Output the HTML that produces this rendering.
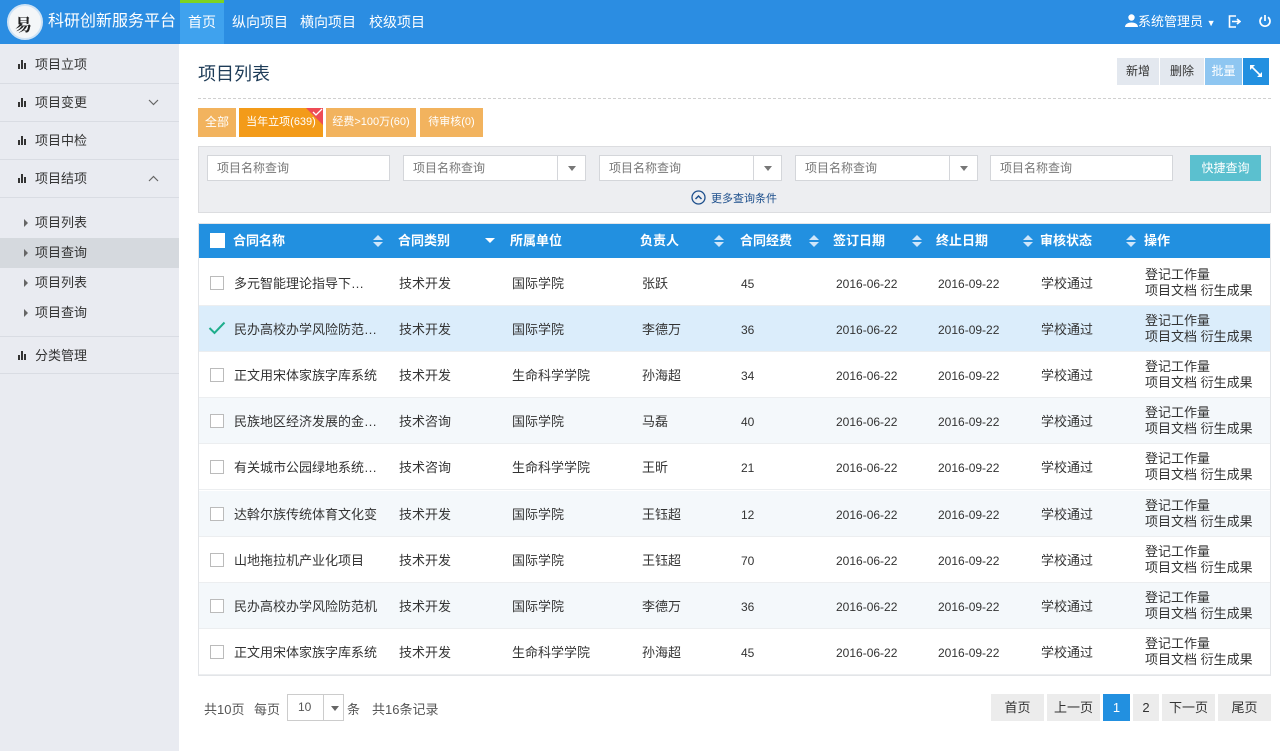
<!DOCTYPE html>
<html><head><meta charset="utf-8"><style>
*{box-sizing:border-box;margin:0;padding:0}
body{width:1280px;height:751px;overflow:hidden;font-family:"Liberation Sans","Noto Sans CJK SC",sans-serif;font-size:13px;color:#333;background:#fff;position:relative}
.abs{position:absolute}
.top{left:0;top:0;width:1280px;height:44px;background:#2b8de2}
.nav{top:0;height:44px;line-height:44px;color:#fff;font-size:14px}
.side{left:0;top:44px;width:179px;height:707px;background:#e9ebf1}
.si{left:0;width:179px;height:38px;line-height:38px;border-bottom:1px solid #d9dce3;font-size:13px;color:#333;padding-left:35px}
.bar{position:absolute;left:18px;top:14px;width:9px;height:9px}
.bar i{position:absolute;bottom:0;width:2px;background:#333}
.sub{left:0;width:179px;height:30px;line-height:30px;padding-left:35px}
.sub:before{content:"";position:absolute;left:24px;top:11px;border-left:4px solid #666;border-top:4px solid transparent;border-bottom:4px solid transparent}
.btn{top:58px;height:27px;line-height:27px;text-align:center;font-size:12px;background:#e3e8ef;color:#333}
.tag{top:108px;height:29px;line-height:29px;color:#fff;font-size:11px;text-align:center;background:#f2b35e}
.inp{top:155px;height:26px;border:1px solid #d4d6da;background:#fff;color:#777;font-size:12px;line-height:24px;padding-left:9px}
.inp .dd{position:absolute;right:0;top:0;width:28px;height:24px;border-left:1px solid #d4d6da}
.inp .dd:after{content:"";position:absolute;left:10px;top:10px;border-top:5px solid #777;border-left:4px solid transparent;border-right:4px solid transparent}
.th{top:223px;left:198px;width:1073px;height:35px;background:#2290e0}
.th span{position:absolute;top:0;line-height:35px;color:#fff;font-weight:bold;font-size:13px}
.sort{position:absolute;top:12px;width:10px;height:12px}
.sort:before{content:"";position:absolute;left:0;top:0;border-bottom:5px solid #cfe6fa;border-left:5px solid transparent;border-right:5px solid transparent}
.sort:after{content:"";position:absolute;left:0;top:7px;border-top:5px solid #cfe6fa;border-left:5px solid transparent;border-right:5px solid transparent}
.row{left:198px;width:1073px;height:46px;border-bottom:1px solid #eceef0;font-size:13px}
.row span{position:absolute;top:1px;line-height:46px}
.row .d{font-size:12px}
.row .op{line-height:16px;top:7px}
.cb{position:absolute;left:12px;top:16px;width:14px;height:14px;border:1px solid #bbb;background:#fff}
.pg{top:694px;height:27px;line-height:27px;text-align:center;background:#ececec;font-size:13px}
</style></head><body>
<div class="abs top"></div>
<div class="abs" style="left:7px;top:4px;width:36px;height:36px;border-radius:50%;background:#f4f6f8;border:2px solid #cfe3f5"><span style="position:absolute;left:6px;top:5px;font-family:'Noto Serif CJK SC',serif;font-weight:bold;font-size:17px;color:#222">易</span></div>
<div class="abs nav" style="left:48px;font-size:16px">科研创新服务平台</div>
<div class="abs" style="left:180px;top:0;width:44px;height:44px;background:#3fa2ee;border-top:3px solid #7ed321"></div>
<div class="abs nav" style="left:188px">首页</div>
<div class="abs nav" style="left:232px">纵向项目</div>
<div class="abs nav" style="left:300px">横向项目</div>
<div class="abs nav" style="left:369px">校级项目</div>
<div class="abs nav" style="left:1125px;font-size:13px"><svg width="13" height="13" viewBox="0 0 13 13" style="vertical-align:-1px"><circle cx="6.5" cy="3.5" r="3.2" fill="#fff"/><path d="M0 13 C0 7 13 7 13 13Z" fill="#fff"/></svg>系统管理员 <span style="font-size:9px">▼</span></div>
<svg class="abs" style="left:1228px;top:15px" width="13" height="13" viewBox="0 0 13 13" fill="none" stroke="#fff" stroke-width="1.6"><path d="M8 1H1.5v11H8M4 6.5h8M9 4l3 2.5-3 2.5"/></svg>
<svg class="abs" style="left:1258px;top:14px" width="14" height="14" viewBox="0 0 14 14" fill="none" stroke="#fff" stroke-width="1.7"><path d="M7 1v6M4 3.2A5 5 0 1 0 10 3.2"/></svg>

<div class="abs side"></div>
<div class="abs si" style="top:46px"><span class="bar"><i style="left:0;height:5px"></i><i style="left:3px;height:9px"></i><i style="left:6px;height:6px"></i></span>项目立项</div>
<div class="abs si" style="top:84px"><span class="bar"><i style="left:0;height:5px"></i><i style="left:3px;height:9px"></i><i style="left:6px;height:6px"></i></span>项目变更<svg style="position:absolute;left:148px;top:15px" width="11" height="7"><path d="M1 1l4.5 4.5L10 1" stroke="#666" fill="none" stroke-width="1.2"/></svg></div>
<div class="abs si" style="top:122px"><span class="bar"><i style="left:0;height:5px"></i><i style="left:3px;height:9px"></i><i style="left:6px;height:6px"></i></span>项目中检</div>
<div class="abs si" style="top:160px"><span class="bar"><i style="left:0;height:5px"></i><i style="left:3px;height:9px"></i><i style="left:6px;height:6px"></i></span>项目结项<svg style="position:absolute;left:148px;top:15px" width="11" height="7"><path d="M1 6l4.5-4.5L10 6" stroke="#666" fill="none" stroke-width="1.2"/></svg></div>
<div class="abs sub" style="top:208px">项目列表</div>
<div class="abs sub" style="top:238px;background:#d5d9de">项目查询</div>
<div class="abs sub" style="top:268px">项目列表</div>
<div class="abs sub" style="top:298px">项目查询</div>
<div class="abs si" style="top:336px;border-top:1px solid #d9dce3"><span class="bar"><i style="left:0;height:5px"></i><i style="left:3px;height:9px"></i><i style="left:6px;height:6px"></i></span>分类管理</div>

<div class="abs" style="left:198px;top:60px;font-size:18px;color:#1d3b57">项目列表</div>
<div class="abs" style="left:198px;top:98px;width:1073px;border-top:1px dashed #d0d0d0"></div>
<div class="abs btn" style="left:1117px;width:42px">新增</div>
<div class="abs btn" style="left:1160px;width:44px">删除</div>
<div class="abs btn" style="left:1205px;width:37px;background:#8ec6f1;color:#fff">批量</div>
<div class="abs btn" style="left:1243px;width:26px;background:#2290e0"><svg width="14" height="14" viewBox="0 0 14 14" style="margin-top:6px" fill="#fff"><path d="M1 1h5L1 6zM13 13H8l5-5z"/><path d="M3 3l8 8" stroke="#fff" stroke-width="1.6"/></svg></div>

<div class="abs tag" style="left:198px;width:38px;font-size:12px">全部</div>
<div class="abs tag" style="left:239px;width:84px;background:#f39b19">当年立项(639)</div>
<div class="abs" style="left:306px;top:108px;width:0;height:0;border-top:17px solid #ee4b55;border-left:17px solid transparent"></div>
<svg class="abs" style="left:312px;top:108px" width="11" height="9"><path d="M1 4l3 3 6-6" stroke="#fff" fill="none" stroke-width="1.3"/></svg>
<div class="abs tag" style="left:326px;width:90px">经费&gt;100万(60)</div>
<div class="abs tag" style="left:420px;width:63px">待审核(0)</div>

<div class="abs" style="left:198px;top:146px;width:1073px;height:67px;background:#edeef1;border:1px solid #dcdde0"></div>
<div class="abs inp" style="left:207px;width:183px">项目名称查询</div>
<div class="abs inp" style="left:403px;width:183px">项目名称查询<span class="dd"></span></div>
<div class="abs inp" style="left:599px;width:183px">项目名称查询<span class="dd"></span></div>
<div class="abs inp" style="left:795px;width:183px">项目名称查询<span class="dd"></span></div>
<div class="abs inp" style="left:990px;width:183px">项目名称查询</div>
<div class="abs" style="left:1190px;top:155px;width:71px;height:26px;line-height:26px;background:#5bc0cf;color:#fff;font-size:12px;text-align:center">快捷查询</div>
<div class="abs" style="left:691px;top:190px;font-size:11px;color:#1d4f8c"><svg width="15" height="15" viewBox="0 0 15 15" style="vertical-align:-3px;margin-right:5px"><circle cx="7.5" cy="7.5" r="6.5" fill="none" stroke="#1d4f8c" stroke-width="1.3"/><path d="M4.5 9l3-3 3 3" fill="none" stroke="#1d4f8c" stroke-width="1.5"/></svg>更多查询条件</div>

<div class="abs th">
<div style="position:absolute;left:12px;top:10px;width:15px;height:15px;background:#fff"></div>
<span style="left:35px">合同名称</span><i class="sort" style="left:175px"></i>
<span style="left:200px">合同类别</span><i style="position:absolute;left:287px;top:15px;border-top:5px solid #fff;border-left:5px solid transparent;border-right:5px solid transparent"></i>
<span style="left:312px">所属单位</span>
<span style="left:442px">负责人</span><i class="sort" style="left:516px"></i>
<span style="left:542px">合同经费</span><i class="sort" style="left:611px"></i>
<span style="left:635px">签订日期</span><i class="sort" style="left:714px"></i>
<span style="left:738px">终止日期</span><i class="sort" style="left:825px"></i>
<span style="left:842px">审核状态</span><i class="sort" style="left:928px"></i>
<span style="left:946px">操作</span>
</div>

<div id="rows"></div>
<script>
var d=[["多元智能理论指导下…","技术开发","国际学院","张跃","45","2016-09-22"],
["民办高校办学风险防范…","技术开发","国际学院","李德万","36","2016-09-22"],
["正文用宋体家族字库系统","技术开发","生命科学学院","孙海超","34","2016-09-22"],
["民族地区经济发展的金…","技术咨询","国际学院","马磊","40","2016-09-22"],
["有关城市公园绿地系统…","技术咨询","生命科学学院","王昕","21","2016-09-22"],
["达斡尔族传统体育文化变","技术开发","国际学院","王钰超","12","2016-09-22"],
["山地拖拉机产业化项目","技术开发","国际学院","王钰超","70","2016-09-22"],
["民办高校办学风险防范机","技术开发","国际学院","李德万","36","2016-09-22"],
["正文用宋体家族字库系统","技术开发","生命科学学院","孙海超","45","2016-09-22"]];
var h="";
d.forEach(function(r,i){
var bg=i==1?"#dbedfb":(i%2==1?"#f4f8fb":"#fff");
var top=260+i*46.1;
var cb=i==1?'<svg style="position:absolute;left:10px;top:15px" width="18" height="14"><path d="M1.5 7l5 5L16.5 1.5" stroke="#1fae8c" fill="none" stroke-width="2"/></svg>':'<i class="cb"></i>';
h+='<div class="abs row" style="top:'+top+'px;background:'+bg+'">'+cb+
'<span style="left:36px">'+r[0]+'</span><span style="left:201px">'+r[1]+'</span><span style="left:314px">'+r[2]+'</span><span style="left:444px">'+r[3]+'</span><span class="d" style="left:543px">'+r[4]+'</span><span class="d" style="left:638px">2016-06-22</span><span class="d" style="left:740px">'+r[5]+'</span><span style="left:843px">学校通过</span><span class="op" style="left:947px">登记工作量<br>项目文档 衍生成果</span></div>';
});
document.getElementById("rows").innerHTML=h;
</script>
<div class="abs" style="left:198px;top:223px;width:1073px;height:453px;border:1px solid #e3e5e8;pointer-events:none"></div>

<div class="abs" style="left:204px;top:699px;font-size:13px;color:#555">共10页</div>
<div class="abs" style="left:254px;top:699px;font-size:13px;color:#555">每页</div>
<div class="abs" style="left:287px;top:694px;width:57px;height:27px;border:1px solid #ccc;font-size:12px;line-height:25px;padding-left:10px;color:#555">10<span style="position:absolute;left:35px;top:0;width:20px;height:25px;border-left:1px solid #ccc"></span><i style="position:absolute;left:43px;top:11px;border-top:5px solid #666;border-left:4px solid transparent;border-right:4px solid transparent"></i></div>
<div class="abs" style="left:347px;top:699px;font-size:13px;color:#555">条</div>
<div class="abs" style="left:372px;top:699px;font-size:13px;color:#555">共16条记录</div>
<div class="abs pg" style="left:991px;width:53px">首页</div>
<div class="abs pg" style="left:1047px;width:53px">上一页</div>
<div class="abs pg" style="left:1103px;width:27px;background:#2290e0;color:#fff">1</div>
<div class="abs pg" style="left:1133px;width:26px">2</div>
<div class="abs pg" style="left:1162px;width:53px">下一页</div>
<div class="abs pg" style="left:1218px;width:53px">尾页</div>
</body></html>
